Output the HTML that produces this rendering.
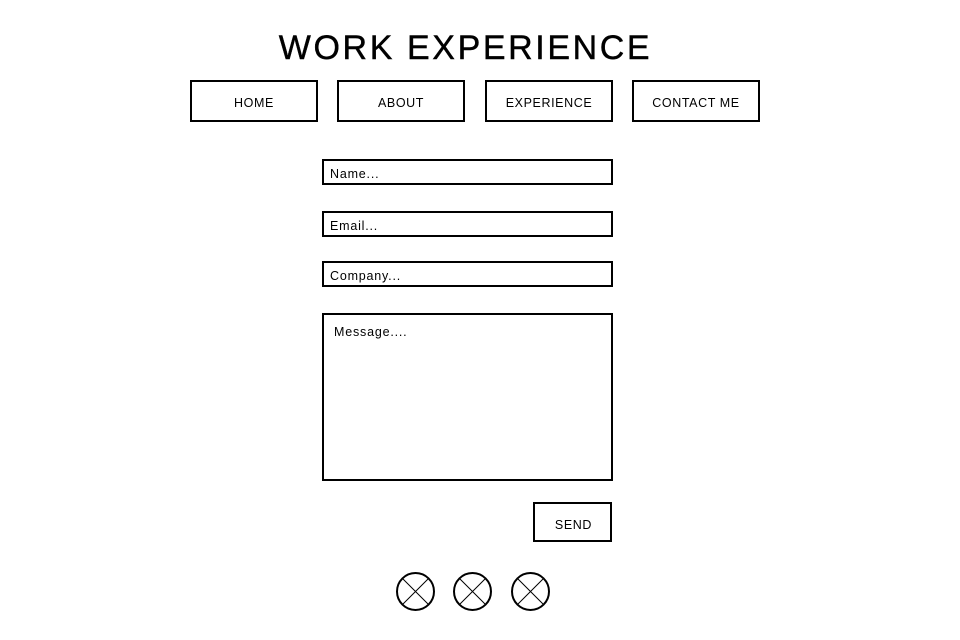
<!DOCTYPE html>
<html><head><style>
body{margin:0;width:960px;height:640px;background:#fff;font-family:"Liberation Sans",sans-serif;color:#000;position:relative;overflow:hidden}
.a{position:absolute;box-sizing:border-box;border:2px solid #000}
.t{position:absolute;white-space:nowrap}
.n{display:flex;align-items:center;justify-content:center;font-size:12.5px;padding-top:3px;letter-spacing:0.6px}
.i{font-size:12.5px;padding-left:6px;letter-spacing:0.8px}
</style></head><body>
<div class="t" style="left:254px;top:29px;font-size:34px;width:423px;text-align:center;letter-spacing:2.6px;-webkit-text-stroke:0.4px #000">WORK EXPERIENCE</div>
<div class="a n" style="left:190px;top:80px;width:128px;height:42px">HOME</div>
<div class="a n" style="left:337px;top:80px;width:128px;height:42px">ABOUT</div>
<div class="a n" style="left:485px;top:80px;width:128px;height:42px">EXPERIENCE</div>
<div class="a n" style="left:632px;top:80px;width:128px;height:42px">CONTACT ME</div>
<div class="a i" style="left:322px;top:159px;width:291px;height:26px;line-height:26px">Name...</div>
<div class="a i" style="left:322px;top:211px;width:291px;height:26px;line-height:26px">Email...</div>
<div class="a i" style="left:322px;top:261px;width:291px;height:26px;line-height:26px">Company...</div>
<div class="a i" style="left:322px;top:313px;width:291px;height:168px;padding-left:10px;padding-top:10px">Message....</div>
<div class="a n" style="left:533px;top:502px;width:79px;height:40px;padding-top:5px;padding-left:2px">SEND</div>
<svg style="position:absolute;left:0;top:0" width="960" height="640">
<g fill="none" stroke="#000">
<circle cx="415.5" cy="591.5" r="18.5" stroke-width="2"/>
<path d="M402.5 578.5L428.5 604.5M428.5 578.5L402.5 604.5"/>
<circle cx="472.5" cy="591.5" r="18.5" stroke-width="2"/>
<path d="M459.5 578.5L485.5 604.5M485.5 578.5L459.5 604.5"/>
<circle cx="530.5" cy="591.5" r="18.5" stroke-width="2"/>
<path d="M517.5 578.5L543.5 604.5M543.5 578.5L517.5 604.5"/>
</g></svg>
</body></html>
